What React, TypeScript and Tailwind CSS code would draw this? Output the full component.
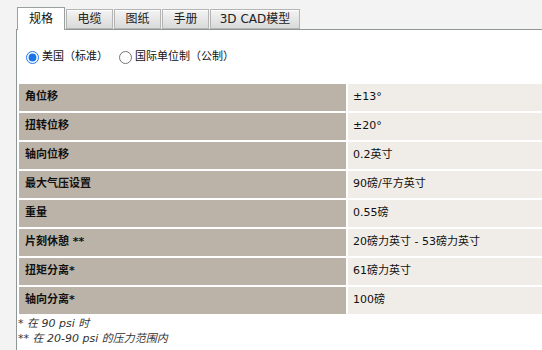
import React from 'react';

const rows: [string, string][] = [
  ['角位移', '±13°'],
  ['扭转位移', '±20°'],
  ['轴向位移', '0.2英寸'],
  ['最大气压设置', '90磅/平方英寸'],
  ['重量', '0.55磅'],
  ['片刻休憩 **', '20磅力英寸 - 53磅力英寸'],
  ['扭矩分离*', '61磅力英寸'],
  ['轴向分离*', '100磅'],
];

const tabs = ['规格', '电缆', '图纸', '手册', '3D CAD模型'];

export default function App() {
  return (
    <div className="w-[542px] h-[350px] overflow-hidden bg-[#f3f3f3] pt-[7px] pl-[16px] font-['DejaVu_Sans','Noto_Sans_CJK_SC',sans-serif] text-[11px] text-[#111]">
      {/* Tabs */}
      <div className="flex items-end gap-px pl-px h-[23px] relative z-10">
        {tabs.map((t, i) =>
          i === 0 ? (
            <div
              key={t}
              className="w-[48px] h-[23px] bg-white border border-b-0 border-[#9aa0a0] flex items-center justify-center text-[12px] text-[#111]"
            >
              {t}
            </div>
          ) : (
            <div
              key={t}
              className={`${i === 4 ? 'w-[90px]' : 'w-[47px]'} h-[20px] mb-px border border-[#b4b4b4] bg-gradient-to-b from-[#f4f4f4] to-[#d9d9d9] shadow-[inset_0_1px_0_#fff] flex items-center justify-center text-[12px] text-[#222]`}
            >
              {t}
            </div>
          )
        )}
      </div>

      {/* Panel */}
      <div className="-mt-px bg-white border-l border-t border-[#8e9696] w-[560px] h-[330px]">
        <div className="flex items-center h-[54px] pl-[9px]">
          <label className="flex items-center">
            <input type="radio" name="units" defaultChecked className="w-[13px] h-[13px] m-0 accent-[#1a73e8]" />
            <span className="ml-[3px]">美国（标准）</span>
          </label>
          <label className="flex items-center ml-[11px]">
            <input type="radio" name="units" className="w-[13px] h-[13px] m-0" />
            <span className="ml-[3px]">国际单位制（公制）</span>
          </label>
        </div>

        <div className="grid grid-cols-[327px_1fr] gap-[2px] p-[2px] pt-0">
          {rows.map(([k, v]) => (
            <React.Fragment key={k}>
              <div className="h-[27px] flex items-center pl-[6px] bg-[#bbb3a8] font-bold">{k}</div>
              <div className="h-[27px] flex items-center pl-[5px] bg-[#f0ece7]">{v}</div>
            </React.Fragment>
          ))}
        </div>

        <div className="pl-[1px] italic text-[#333] leading-[15px]">
          <div>* 在 90 psi 时</div>
          <div>** 在 20-90 psi 的压力范围内</div>
        </div>
      </div>
    </div>
  );
}
